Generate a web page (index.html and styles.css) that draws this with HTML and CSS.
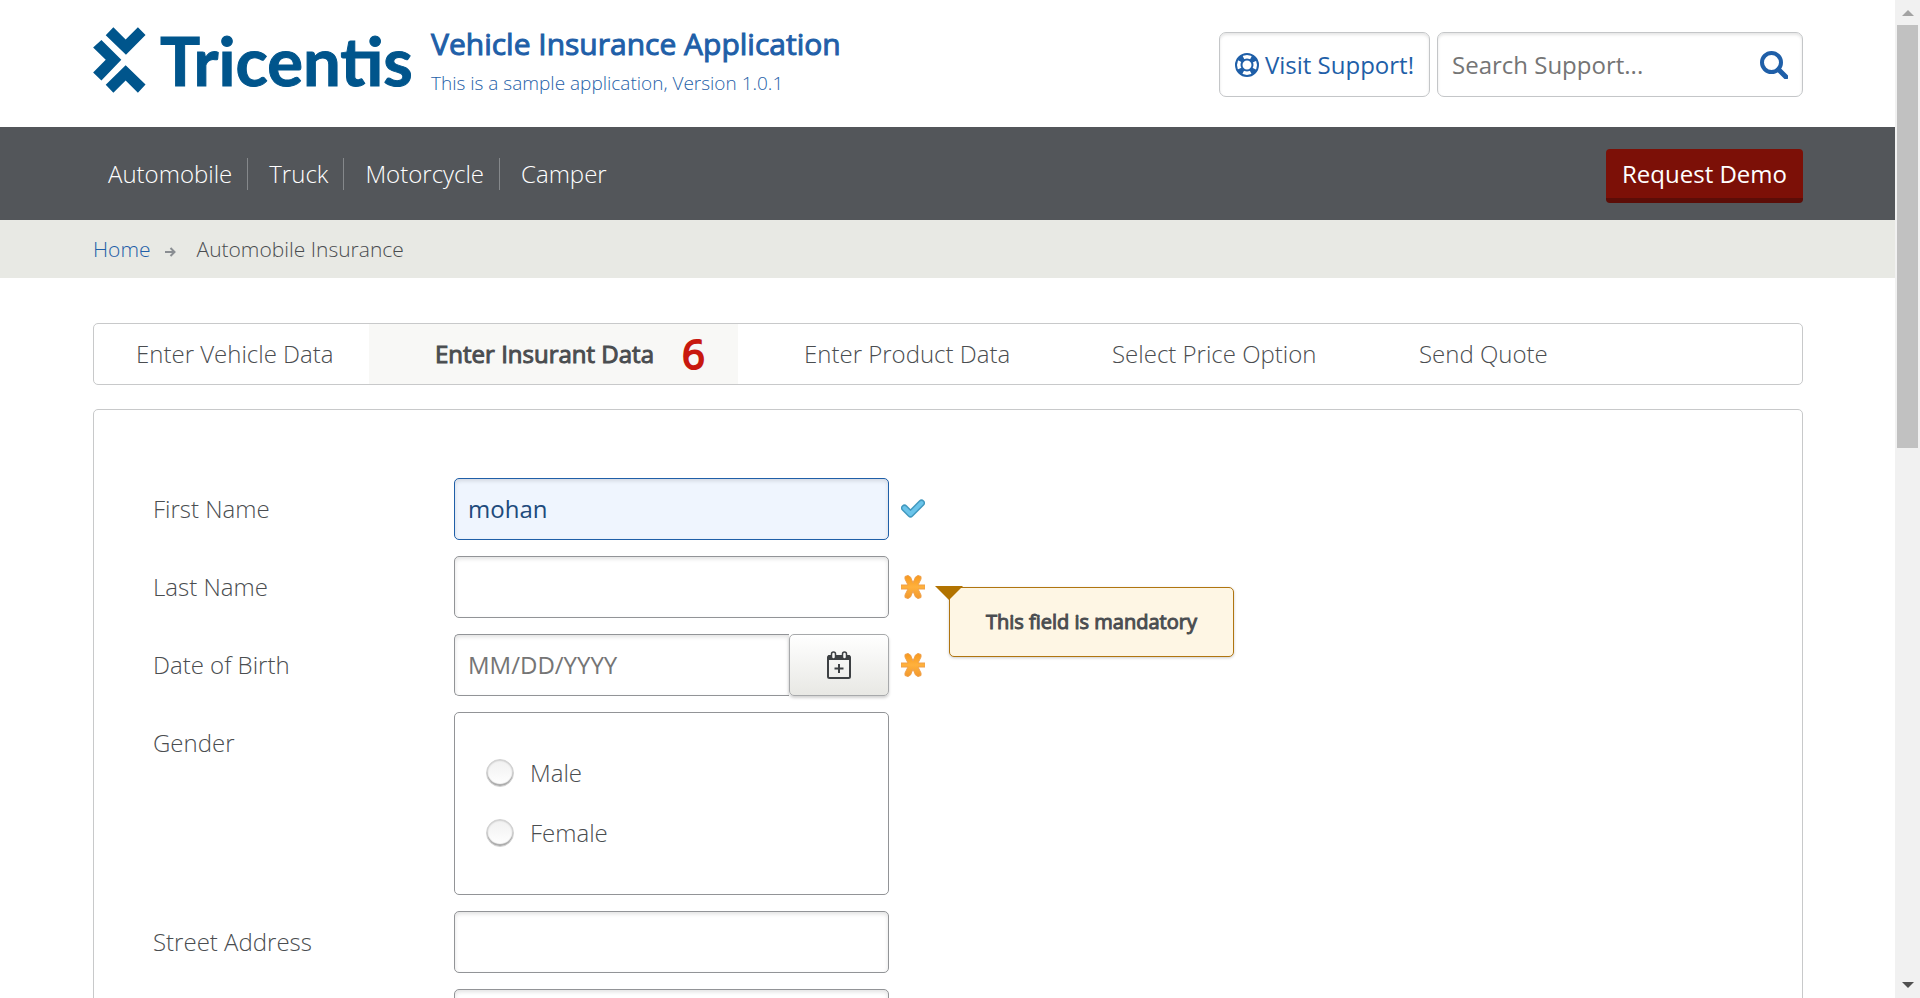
FILE: index.html
```html
<!DOCTYPE html>
<html lang="en">
<head>
<meta charset="utf-8">
<title>Enter Insurant Data</title>
<link rel="stylesheet" href="styles.css">
</head>
<body>
<svg class="sprites" aria-hidden="true">
  <defs>
    <linearGradient id="orange" x1="0" y1="0" x2="0" y2="1"><stop offset="0" stop-color="#f7981d"/><stop offset=".5" stop-color="#ffb13d"/><stop offset="1" stop-color="#f2982c"/></linearGradient>
    <symbol id="star" viewBox="0 0 24 24">
      <path d="M0 10H7L4 4V1.500L7 .5L9.500 2L12 8L14.500 2L17 .5L20 1.500V4L17 10H24V14H17L20 20V22.500L17 23.500L14.500 22L12 16L9.500 22L7 23.500L4 22.500V20L7 14H0Z" fill="url(#orange)" stroke="#efa04a" stroke-linejoin="round"/>
    </symbol>
  </defs>
</svg>
<div class="window">
  <div class="page">
    <header class="header">
      <a class="logo" href="#">
        <svg class="logo-mark" viewBox="39 50 159 199" aria-hidden="true"><path d="M77 75L100 51L137 88L174 51L197 74L138 134ZM39 112L64 89L124 149L64 211L39 187L77 149ZM137 165L197 223L174 248L137 211L100 248L77 224Z" fill="#00558c"/></svg>
        <span class="logo-name">Tricentis</span>
      </a>
      <div class="title">
        <h1>Vehicle Insurance Application</h1>
        <p>This is a sample application, Version 1.0.1</p>
      </div>
      <div class="support">
        <a class="visit" href="#">
          <svg viewBox="0 0 24 24" width="24" height="24" aria-hidden="true"><circle cx="12" cy="12" r="11" fill="none" stroke="#1f5fa8" stroke-width="2"/><circle cx="12" cy="12" r="5.500" fill="none" stroke="#1f5fa8" stroke-width="2"/><circle cx="12" cy="12" r="8" fill="none" stroke="#1f5fa8" stroke-width="6" stroke-dasharray="5 7.566" stroke-dashoffset="-3.783"/></svg>
          Visit Support!
        </a>
        <form class="search">
          <input type="text" aria-label="Search Support" placeholder="Search Support...">
          <button type="button" aria-label="Search"><svg viewBox="0 0 28 28" width="28" height="28" aria-hidden="true"><circle cx="11.500" cy="11.500" r="9.500" fill="none" stroke="#1f5fa8" stroke-width="4"/><path d="M18.500 18.500L26 26" stroke="#1f5fa8" stroke-width="5" stroke-linecap="round"/></svg></button>
        </form>
      </div>
    </header>
    <nav class="nav">
      <ul>
        <li><a href="#">Automobile</a></li>
        <li><a href="#">Truck</a></li>
        <li><a href="#">Motorcycle</a></li>
        <li><a href="#">Camper</a></li>
      </ul>
      <button type="button" class="demo">Request Demo</button>
    </nav>
    <div class="crumbs">
      <a href="#">Home</a>
      <svg viewBox="0 0 11 10" width="11" height="10" aria-hidden="true"><path d="M0 5H9M5.500 1L9.500 5L5.500 9" fill="none" stroke="#8a8e92" stroke-width="2"/></svg>
      <span>Automobile Insurance</span>
    </div>
    <main class="content">
      <div class="tabs">
        <a href="#">Enter Vehicle Data</a>
        <a href="#" class="active">Enter Insurant Data <span class="count">6</span></a>
        <a href="#" class="after">Enter Product Data</a>
        <a href="#">Select Price Option</a>
        <a href="#">Send Quote</a>
      </div>
      <form class="form">
        <div class="row">
          <label for="first">First Name</label>
          <input id="first" class="field valid" type="text" value="mohan">
          <svg class="mark" viewBox="0 0 24 24" aria-hidden="true"><path d="M3.500 11L9.500 17L20.500 6" fill="none" stroke="#4299bf" stroke-width="7" stroke-linecap="round" stroke-linejoin="round"/><path d="M3.500 11L9.500 17L20.500 6" fill="none" stroke="#6bc4ea" stroke-width="4" stroke-linecap="round" stroke-linejoin="round"/></svg>
        </div>
        <div class="row">
          <label for="last">Last Name</label>
          <input id="last" class="field" type="text">
          <div class="mark">
            <svg viewBox="0 0 24 24" width="24" height="24" aria-hidden="true"><use href="#star"/></svg>
            <div class="tip" role="alert">This field is mandatory</div>
          </div>
        </div>
        <div class="row">
          <label for="birth">Date of Birth</label>
          <div class="date">
            <input id="birth" class="field" type="text" placeholder="MM/DD/YYYY">
            <button type="button" aria-label="Open calendar"><svg viewBox="0 0 24 28" width="24" height="28" aria-hidden="true"><path d="M1 9V5Q1 4 2 4H22Q23 4 23 5V9Z" fill="#3d4043"/><rect x="1" y="5" width="22" height="22" rx="1.500" fill="none" stroke="#3d4043" stroke-width="2"/><rect x="4.500" y="1" width="4" height="7" rx="2" fill="#f7f7f6" stroke="#3d4043" stroke-width="1.500"/><rect x="15.500" y="1" width="4" height="7" rx="2" fill="#f7f7f6" stroke="#3d4043" stroke-width="1.500"/><path d="M12 13V22M7.500 17.500H16.500" stroke="#3d4043" stroke-width="2"/></svg></button>
          </div>
          <svg class="mark" viewBox="0 0 24 24" aria-hidden="true"><use href="#star"/></svg>
        </div>
        <div class="row">
          <span class="label" id="gender">Gender</span>
          <div class="choices" role="radiogroup" aria-labelledby="gender">
            <label><input type="radio" name="gender">Male</label>
            <label><input type="radio" name="gender">Female</label>
          </div>
        </div>
        <div class="row">
          <label for="street">Street Address</label>
          <input id="street" class="field" type="text">
        </div>
        <div class="row">
          <select class="field" aria-label="Country"><option></option></select>
        </div>
      </form>
    </main>
  </div>
  <div class="scrollbar" aria-hidden="true">
    <svg viewBox="0 0 12 6" width="12" height="6"><path d="M0 6L6 0L12 6Z" fill="#a3a3a3"/></svg>
    <div class="track"><div class="thumb"></div></div>
    <svg viewBox="0 0 12 6" width="12" height="6"><path d="M0 0H12L6 6Z" fill="#505050"/></svg>
  </div>
</div>
</body>
</html>
```
FILE: styles.css
```css
* { box-sizing: border-box; }
body {
  margin: 0;
  background: #fff;
  color: #4a4d50;
  font-family: "Open Sans", sans-serif;
  font-size: 24px;
  font-weight: 300;
  line-height: 32px;
}
h1, p, ul { margin: 0; padding: 0; }
a { color: #1f5fa8; text-decoration: none; }
input, button, select { font: inherit; color: inherit; }
.sprites { position: absolute; width: 0; height: 0; }
.window { display: flex; height: 100vh; overflow: hidden; }
.page { flex: 1; min-width: 0; overflow: hidden; }

.header {
  display: flex;
  height: 127px;
  padding: 27px 92px 0 93px;
}
.logo { display: flex; width: 338px; height: 66px; align-items: center; }
.logo-mark { flex: none; width: 53px; height: 66px; }
.logo-name {
  margin-left: 14px;
  color: #00558c;
  font-family: Lato, sans-serif;
  font-size: 67px;
  font-weight: 700;
  line-height: 66px;
  -webkit-text-stroke: 1px;
}
.title { color: #1f5fa8; }
.title h1 { font-size: 30px; font-weight: 400; line-height: 34px; -webkit-text-stroke: 1px; }
.title p { padding-top: 6px; font-size: 19px; line-height: 32px; }
.support { display: flex; gap: 7px; height: 65px; margin: 5px 0 0 auto; font-weight: 400; }
.visit, .search {
  display: flex;
  align-items: center;
  border: 1px solid #c4c6c8;
  border-radius: 7px;
  box-shadow: inset 0 2px 3px #0000001a;
}
.visit { gap: 6px; padding: 0 15px; white-space: nowrap; }
.search { width: 366px; padding: 0 14px; }
.search input { flex: 1; min-width: 0; padding: 0; border: 0; background: none; outline: 0; }
.search button { display: flex; padding: 0; border: 0; background: none; }
::placeholder { color: #757575; opacity: 1; }

.nav {
  display: flex;
  align-items: center;
  justify-content: space-between;
  height: 93px;
  padding: 0 92px 0 93px;
  background: #53565a;
}
.nav ul { display: flex; list-style: none; }
.nav li { padding: 0 15px 0 21px; border-right: 1px solid #85888b; }
.nav li:first-child { padding-left: 15px; }
.nav li:last-child { border: 0; }
.nav a { color: #fff; }
.demo {
  height: 54px;
  margin-top: 5px;
  padding: 0 16px;
  border: 0;
  border-bottom: 5px solid #5c0d07;
  border-radius: 4px;
  background: #7c1007;
  color: #fff;
  font-weight: 400;
}

.crumbs {
  display: flex;
  align-items: center;
  height: 58px;
  padding: 0 93px;
  background: #e8e9e4;
  font-size: 21px;
}
.crumbs svg { margin: 6px 21px 0 14px; }

.content { padding: 45px 92px 0 93px; }
.tabs {
  display: flex;
  height: 62px;
  border: 1px solid #c8c9ca;
  border-radius: 5px;
}
.tabs a { display: flex; align-items: center; width: 307px; padding-left: 42px; color: inherit; }
.tabs a:first-child { width: 275px; }
.tabs .active { width: 369px; padding-left: 66px; background: #f8f8f6; font-weight: 400; -webkit-text-stroke: 1px; }
.tabs .after { padding-left: 66px; width: 332px; }
.count { margin-left: 28px; color: #c8190f; font-size: 40px; -webkit-text-stroke: 2px; }

.form {
  display: flex;
  flex-direction: column;
  gap: 16px;
  margin-top: 24px;
  padding: 68px 59px;
  border: 1px solid #c8c9ca;
  border-radius: 5px;
}
.row { display: grid; grid-template-columns: 301px 435px 24px; }
.row > select { grid-column: 2; }
.row > label, .label { line-height: 62px; }
.field {
  width: 100%;
  height: 62px;
  padding: 0 13px 2px;
  border: 1px solid #929497;
  border-radius: 5px;
  background: #fff;
  box-shadow: inset 0 2px 4px #0000001f;
  font-weight: 400;
  outline: 0;
}
.valid { border-color: #1f5fa8; background: #eff5fe; color: #204a7c; }
.mark { position: relative; display: flex; align-self: center; width: 24px; height: 24px; margin-left: 12px; }
.tip {
  position: absolute;
  top: 12px;
  left: 48px;
  padding: 18px 36px;
  border: 1px solid #b07510;
  border-radius: 5px;
  background: #fef6e4;
  box-shadow: 0 1px 3px #00000033;
  font-size: 20px;
  font-weight: 400;
  -webkit-text-stroke: 1px;
  white-space: nowrap;
}
.tip::before {
  content: "";
  position: absolute;
  top: -2px;
  left: -15px;
  border: 14px solid transparent;
  border-top-color: #b27300;
  border-bottom: 0;
}
.date { display: flex; }
.date .field { flex: 1; min-width: 0; border-right: 0; border-radius: 5px 0 0 5px; }
.date button {
  display: flex;
  align-items: center;
  justify-content: center;
  width: 100px;
  padding: 0;
  border: 1px solid #a7a9ab;
  border-radius: 5px;
  background: linear-gradient(#fff, #e8e8e4);
  box-shadow: 0 2px 3px #0000002e;
}
.choices {
  display: flex;
  flex-direction: column;
  gap: 28px;
  height: 183px;
  padding: 44px 31px;
  border: 1px solid #929497;
  border-radius: 5px;
}
.choices label { display: flex; align-items: center; gap: 16px; }
.choices input {
  appearance: none;
  width: 28px;
  height: 28px;
  margin: 0;
  border: 1px solid #d0d0d0;
  border-radius: 50%;
  background: linear-gradient(#f1f1f1, #fff);
  box-shadow: inset 0 -2px 1px #a9a9a9, inset 0 0 2px #999;
}

.scrollbar {
  display: flex;
  flex: none;
  flex-direction: column;
  align-items: center;
  width: 25px;
  padding: 10px 0;
  background: #f1f1f1;
}
.track { flex: 1; width: 21px; padding-top: 9px; }
.thumb { height: 423px; background: #c1c1c1; }
```
